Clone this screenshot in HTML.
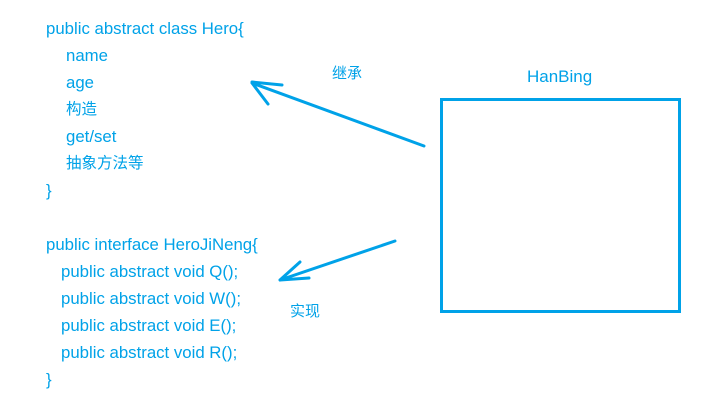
<!DOCTYPE html>
<html><head><meta charset="utf-8"><style>
body{margin:0;width:713px;height:403px;background:#fff;position:relative;overflow:hidden;font-family:"Liberation Sans","Noto Sans CJK SC",sans-serif;color:#00a2e8;font-size:16.8px}
.t{position:absolute;white-space:nowrap;line-height:20px}
.c{font-size:15.5px}
</style></head><body>
<div class="t" style="left:46px;top:19px">public abstract class Hero{</div>
<div class="t" style="left:66px;top:46px">name</div>
<div class="t" style="left:66px;top:73px">age</div>
<div class="t c" style="left:66px;top:100px">构造</div>
<div class="t" style="left:66px;top:127px">get/set</div>
<div class="t c" style="left:66px;top:154px">抽象方法等</div>
<div class="t" style="left:46px;top:181px">}</div>
<div class="t" style="left:46px;top:235px">public interface HeroJiNeng{</div>
<div class="t" style="left:61px;top:262px">public abstract void Q();</div>
<div class="t" style="left:61px;top:289px">public abstract void W();</div>
<div class="t" style="left:61px;top:316px">public abstract void E();</div>
<div class="t" style="left:61px;top:343px">public abstract void R();</div>
<div class="t" style="left:46px;top:370px">}</div>
<div class="t" style="left:332px;top:64px;font-size:15px">继承</div>
<div class="t" style="left:527px;top:67px;font-size:17px">HanBing</div>
<div class="t" style="left:290px;top:302px;font-size:15px">实现</div>
<svg width="713" height="403" style="position:absolute;left:0;top:0" fill="none" stroke="#00a2e8" stroke-width="3" stroke-linecap="round">
<rect x="441.5" y="99.5" width="238" height="212"/>
<path d="M424 146 L252 83 M252 82 L282 85 M252 83 L268 104"/>
<path d="M395 241 L280 280 M280 280 L309 278 M280 280 L300 262"/>
</svg>
</body></html>
